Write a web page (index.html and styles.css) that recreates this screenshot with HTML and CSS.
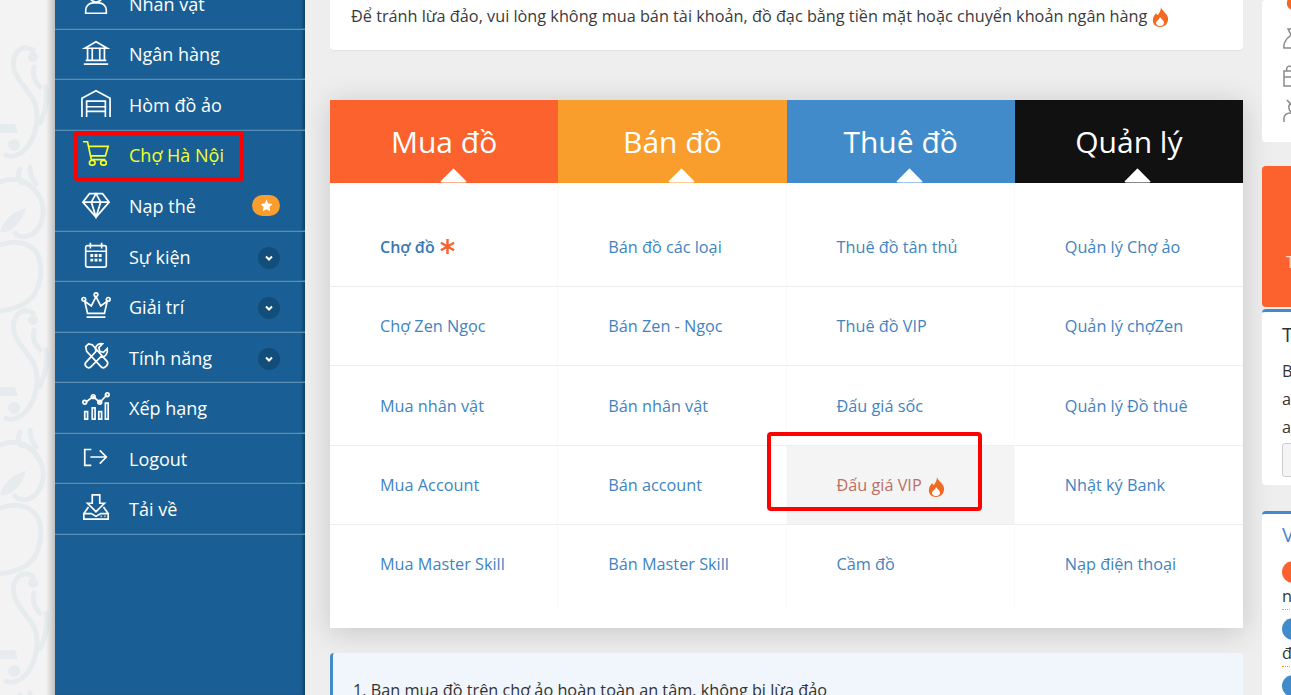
FILE: index.html
```html
<!DOCTYPE html>
<html lang="en">
<head>
  <meta charset="UTF-8"/>
  <meta name="viewport" content="width=device-width, initial-scale=1.0"/>
  <title>Chợ Hà Nội</title>
  <link rel="stylesheet" href="styles.css">
</head>
<body>

  <!-- Patterned page edge -->
  <div class="gutter">
    <svg class="damask" width="55" height="695" viewBox="0 0 55 695">
      <defs>
        <g id="scroll">
          <circle cx="33" cy="20" r="5" class="blot"/>
          <path d="M33 13C20 6 11 18 14 32c3 12 14 20 20 32 5 12 4 28-4 42-5 9-16 16-24 12"/>
          <circle cx="14" cy="108" r="6" class="blot"/>
          <path d="M34 30c-2 8 0 14 6 20M46 50c2 12 0 24-6 36M20 132c-3 6-2 10 2 14M30 130c0 6 2 12 6 17"/>
          <path d="M0 145c14-6 30-2 39 14 7 12 5 27-4 36-7 6-16 6-20 1"/>
          <path d="M0 96h18l-3-9H0zM0 195c12 2 22-10 26-24-10 2-22 10-26 24z" class="blot"/>
          <path d="M0 208c16-6 32-2 38 10 5 12 3 28-4 40-6 8-18 14-34 16"/>
        </g>
      </defs>
      <use href="#scroll" y="37"/>
      <use href="#scroll" y="300"/>
      <use href="#scroll" y="563"/>
    </svg>
  </div>

  <!-- Sidebar -->
  <div class="sidebar">
    <div class="side-item">
      <svg class="side-icon" viewBox="0 0 32 32"><circle cx="16" cy="9" r="7"/><path d="M5 28v-3c0-5 4-8 8-8h6c4 0 8 3 8 8v3z"/></svg>
      <span>Nhân vật</span>
    </div>
    <div class="side-item">
      <svg class="side-icon" viewBox="0 0 32 32"><path d="M4 12 16 5l12 7zM7 12v13M12 12v13M20 12v13M25 12v13M5 25h22M3 29h26"/></svg>
      <span>Ngân hàng</span>
    </div>
    <div class="side-item">
      <svg class="side-icon" viewBox="0 0 32 32"><path d="M1 31V11L16 3l15 8v20M6 31V14h20v17M6 20h20M6 25h20"/></svg>
      <span>Hòm đồ ảo</span>
    </div>
    <div class="side-item item-current">
      <svg class="side-icon" viewBox="0 0 32 32"><path d="M2 4h5l4 19h15M8 9h21l-3 10H10"/><rect x="9" y="24" width="6" height="5" rx="2.500"/><rect x="21" y="24" width="6" height="5" rx="2.500"/></svg>
      <span>Chợ Hà Nội</span>
    </div>
    <div class="side-item">
      <svg class="side-icon" viewBox="0 0 32 32"><path d="M9 5h14l7 9-14 16L2 14zM2 14h28M11 14l5 16 5-16-5-9z"/></svg>
      <span>Nạp thẻ</span>
      <span class="star-pill"><svg width="13" height="13" viewBox="0 0 24 24"><path d="m12 1 3.400 7.300 7.600 1-5.600 5.400 1.500 8L12 18.800 5.100 22.700l1.500-8L1 9.300l7.600-1z"/></svg></span>
    </div>
    <div class="side-item">
      <svg class="side-icon" viewBox="0 0 32 32"><rect x="5" y="6" width="22" height="23" rx="2"/><path d="M5 12h22M10 3v6M22 3v6"/><path class="cal-dots" d="M10 15h3v3h-3zM14.500 15h3v3h-3zM19 15h3v3h-3zM10 20h3v3h-3zM14.500 20h3v3h-3zM19 20h3v3h-3z"/></svg>
      <span>Sự kiện</span>
      <span class="chevron"><svg width="10" height="10" viewBox="0 0 10 10"><path d="m2 3.500 3 3 3-3"/></svg></span>
    </div>
    <div class="side-item">
      <svg class="side-icon" viewBox="0 0 32 32"><circle cx="16" cy="5" r="2"/><circle cx="3" cy="10" r="2"/><circle cx="29" cy="10" r="2"/><path d="M7 25 4 12l7 5 5-10 5 10 7-5-3 13zM6 29h20"/></svg>
      <span>Giải trí</span>
      <span class="chevron"><svg width="10" height="10" viewBox="0 0 10 10"><path d="m2 3.500 3 3 3-3"/></svg></span>
    </div>
    <div class="side-item">
      <svg class="side-icon" viewBox="0 0 32 32"><path d="m5 6 3-3 4 1 16 18c2 3-3 8-6 6L6 11zM28 8l-4 4-4-1-1-4 4-4c-5-1-9 3-7 8L5 23c-2 3 2 7 5 5l11-11c5 1 8-4 7-9z"/></svg>
      <span>Tính năng</span>
      <span class="chevron"><svg width="10" height="10" viewBox="0 0 10 10"><path d="m2 3.500 3 3 3-3"/></svg></span>
    </div>
    <div class="side-item">
      <svg class="side-icon" viewBox="0 0 32 32"><path d="M4 22h3v8H4zM12 18h3v12h-3zM19 22h3v8h-3zM26 13h3v17h-3zM5 12l8-6 7 6 8-8"/><circle cx="4" cy="12" r="2"/><circle cx="13" cy="6" r="2"/><circle cx="20" cy="12" r="2"/><circle cx="28" cy="4" r="2"/></svg>
      <span>Xếp hạng</span>
    </div>
    <div class="side-item">
      <svg class="side-icon" viewBox="0 0 32 32"><path d="M11 8H4v17h7M10 16h17M20 9l7 7-7 7"/></svg>
      <span>Logout</span>
    </div>
    <div class="side-item">
      <svg class="side-icon" viewBox="0 0 32 32"><path d="M12 3h8v9h5l-9 9-9-9h5zM8 16l-5 7v6h26v-6l-5-7M3 23h8l5 3 5-3h8M21 26h1M25 26h1"/></svg>
      <span>Tải về</span>
    </div>
  </div>

  <!-- Main column -->
  <div class="main">
    <div class="notice">
      Để tránh lừa đảo, vui lòng không mua bán tài khoản, đồ đạc bằng tiền mặt hoặc chuyển khoản ngân hàng
      <svg class="flame" width="17" height="20" viewBox="0 0 17 20"><path fill="#f4691f" d="M9 0c1 4 6 6 7 11 .6 5-3 9-8 9-4 0-8-3-7-8 .4-3 2-4 3-6 .6 1 1 2 2 2 1-2 3-4 3-8z"/><path fill="#fff" d="M8 10c1 2 4 3 4 6 0 2-2 3-4 3s-4-1-4-3c0-2 3-3 4-6z"/></svg>
    </div>

    <div class="market">
      <div class="market-head">
        <div class="head-cell head-buy">Mua đồ</div>
        <div class="head-cell head-sell">Bán đồ</div>
        <div class="head-cell head-rent">Thuê đồ</div>
        <div class="head-cell head-manage">Quản lý</div>
      </div>
      <div class="market-body">
        <a class="link link-strong">Chợ đồ <svg class="star-mark" width="17" height="17" viewBox="0 0 18 18"><path stroke="#fb6230" stroke-width="2.600" d="M9 1v16M2 5l14 8M16 5 2 13"/></svg></a>
        <a class="link">Bán đồ các loại</a>
        <a class="link">Thuê đồ tân thủ</a>
        <a class="link">Quản lý Chợ ảo</a>

        <a class="link">Chợ Zen Ngọc</a>
        <a class="link">Bán Zen - Ngọc</a>
        <a class="link">Thuê đồ VIP</a>
        <a class="link">Quản lý chợZen</a>

        <a class="link">Mua nhân vật</a>
        <a class="link">Bán nhân vật</a>
        <a class="link">Đấu giá sốc</a>
        <a class="link">Quản lý Đồ thuê</a>

        <a class="link">Mua Account</a>
        <a class="link">Bán account</a>
        <a class="link link-hot">Đấu giá VIP <svg class="flame" width="17" height="20" viewBox="0 0 17 20"><path fill="#f4691f" d="M9 0c1 4 6 6 7 11 .6 5-3 9-8 9-4 0-8-3-7-8 .4-3 2-4 3-6 .6 1 1 2 2 2 1-2 3-4 3-8z"/><path fill="#fff" d="M8 10c1 2 4 3 4 6 0 2-2 3-4 3s-4-1-4-3c0-2 3-3 4-6z"/></svg></a>
        <a class="link">Nhật ký Bank</a>

        <a class="link">Mua Master Skill</a>
        <a class="link">Bán Master Skill</a>
        <a class="link">Cầm đồ</a>
        <a class="link">Nạp điện thoại</a>
      </div>
    </div>

    <div class="alert">1. Bạn mua đồ trên chợ ảo hoàn toàn an tâm, không bị lừa đảo</div>
  </div>

  <!-- Right column, runs off the window -->
  <div class="aside">
    <div class="aside-card card-icons">
      <svg class="flame-top" width="17" height="20" viewBox="0 0 17 20"><path fill="#f4691f" d="M9 0c1 4 6 6 7 11 .6 5-3 9-8 9-4 0-8-3-7-8 .4-3 2-4 3-6 .6 1 1 2 2 2 1-2 3-4 3-8z"/></svg>
      <svg class="aside-icon" width="24" height="24" viewBox="0 0 24 24"><path d="M6 2h9l-3 6c6 3 10 8 9 13H2C1 15 5 11 9 8z"/></svg>
      <svg class="aside-icon" width="24" height="24" viewBox="0 0 24 24"><path d="M2 8h20v15H2zM2 14h20M10 8v15M5 8c-2-5 5-8 6 0"/></svg>
      <svg class="aside-icon" width="24" height="24" viewBox="0 0 24 24"><path d="M5 1l8 9M2 23v-4c0-3 3-5 6-5h6M9 4c-3 2-3 8 1 9"/></svg>
    </div>
    <div class="aside-card card-orange"><span>T</span></div>
    <div class="aside-card card-text card-first">
      <div class="card-title">T</div>
      <p>B</p>
      <p>a</p>
      <p>a</p>
      <div class="card-input"></div>
    </div>
    <div class="aside-card card-text card-list">
      <div class="card-title card-title-blue">V</div>
      <div class="dot dot-orange"></div>
      <p class="dotted">n</p>
      <div class="dot"></div>
      <p class="dotted">đ</p>
      <div class="dot"></div>
    </div>
  </div>

</body>
</html>
```

FILE: styles.css
```css
html, body {
  height: 100%;
}
body {
  margin: 0;
  display: flex;
  overflow: hidden;
  height: 695px;
  background: #eee;
  color: #333;
  font-family: "Open Sans", sans-serif;
  font-size: 16.25px;
}
.gutter {
  position: relative;
  flex: 0 0 55px;
  background: #f3f3f4;
}
/* Sidebar's shadow on the patterned edge */
.gutter::after {
  content: "";
  position: absolute;
  top: 0;
  right: 0;
  bottom: 0;
  width: 9px;
  background: linear-gradient(to right, rgba(150, 150, 150, 0), rgba(150, 150, 150, .55));
}
.damask {
  display: block;
  fill: none;
  stroke: #e6ebee;
  stroke-width: 5;
  stroke-linecap: round;
}
.damask .blot {
  fill: #e6ebee;
  stroke: none;
}
/* Sidebar */
.sidebar {
  flex: 0 0 250px;
  margin-top: -21px;
  height: 716px;
  background: #195f95;
  box-shadow: inset -3px 0 3px -1px #0f3f66;
  box-sizing: border-box;
}
.side-item {
  display: flex;
  align-items: center;
  height: 50.55px;
  box-sizing: border-box;
  padding: 0 25px 0 26px;
  border-bottom: 1px solid #5a8db3;
  box-shadow: inset 0 -1px #2a6b9b;
  color: #fff;
  font-size: 18px;
  white-space: nowrap;
}
.side-icon {
  flex: 0 0 30px;
  width: 30px;
  height: 30px;
  margin: -4px 18px 0 0;
  fill: none;
  stroke: #fff;
  stroke-width: 1.8;
}
.cal-dots {
  fill: #fff;
  stroke: none;
}
.item-current {
  color: #f5ff2a;
  outline: 4px solid #f00;
  outline-offset: -4px;
  border-bottom-color: transparent;
  box-shadow: none;
  width: 170px;
  margin: 0 0 0 19px;
  padding: 0 0 0 7px;
  border-radius: 3px;
}
.item-current .side-icon {
  stroke: #f5ff2a;
}
.star-pill {
  display: flex;
  align-items: center;
  justify-content: center;
  width: 28px;
  height: 21px;
  margin-left: auto;
  border-radius: 11px;
  background: #fa9d2f;
}
.star-pill svg {
  fill: #fff;
}
.chevron {
  display: flex;
  align-items: center;
  justify-content: center;
  width: 22px;
  height: 22px;
  margin: 2px 0 0 auto;
  border-radius: 50%;
  background: #134d7a;
}
.chevron svg {
  fill: none;
  stroke: #fff;
  stroke-width: 2;
}
/* Main column */
.main {
  flex: 0 0 913px;
  margin: 0 19px 0 25px;
}
.notice {
  height: 50px;
  box-sizing: border-box;
  padding-left: 21px;
  line-height: 33px;
  background: #fff;
  border-radius: 0 0 4px 4px;
  box-shadow: 0 1px 1px #e2e2e2;
  color: #3a3a3a;
}
.flame {
  vertical-align: -5px;
}
/* Market table */
.market {
  margin-top: 50px;
  background: #fff;
  box-shadow: 0 4px 28px rgba(0, 0, 0, .17);
  padding-bottom: 20px;
}
.market-head {
  display: grid;
  grid-template-columns: repeat(4, 1fr);
}
.head-cell {
  position: relative;
  height: 83px;
  line-height: 84px;
  text-align: center;
  color: #fff;
  font-size: 30px;
}
.head-cell::after {
  content: "";
  position: absolute;
  left: calc(50% + 9px);
  bottom: -8px;
  width: 19px;
  height: 19px;
  margin-left: -9.5px;
  background: #fff;
  transform: rotate(45deg);
  clip-path: polygon(0 0, 100% 0, 100% 8%, 8% 100%, 0 100%);
}
.head-buy {
  background: #fb622d;
}
.head-sell {
  background: #f99d2d;
}
.head-rent {
  background: #428bca;
}
.head-manage {
  background: #111;
}
.market-body {
  display: grid;
  grid-template-columns: repeat(4, 1fr);
  grid-template-rows: 103.6px 79.3px 79.7px 79.2px 83.4px;
}
.link {
  display: flex;
  align-items: flex-end;
  gap: 4px;
  box-sizing: border-box;
  padding: 0 0 27px 50px;
  border-bottom: 1px solid #eee;
  border-right: 1px solid #fafafa;
  color: #3f84c0;
  line-height: 24px;
}
.link:nth-child(n+17) {
  border-bottom: 0;
  padding-bottom: 32px;
}
.link:nth-child(4n) {
  border-right: 0;
}
.link-strong {
  font-size: 16px;
  font-weight: 600;
  color: #3a78b0;
}
.star-mark {
  margin-bottom: 4px;
}
.link-hot {
  position: relative;
  background: #f4f4f4;
  color: #bd6f64;
}
.link-hot .flame {
  margin-left: 2px;
}
/* Red marker drawn over the cell */
.link-hot::before {
  content: "";
  position: absolute;
  left: -20px;
  top: -14px;
  width: 207px;
  height: 71px;
  border: 4px solid #f00;
  border-radius: 4px;
}
.alert {
  margin-top: 25px;
  height: 60px;
  box-sizing: border-box;
  padding: 26px 0 0 20px;
  border-left: 3px solid #428bca;
  border-radius: 4px 0 0 0;
  background: #f0f6fb;
  color: #333;
}
/* Right column */
.aside {
  flex: 0 0 29px;
  overflow: hidden;
}
.aside-card {
  width: 60px;
  background: #fff;
  border-radius: 4px;
}
.card-icons {
  display: flex;
  flex-direction: column;
  gap: 12px;
  height: 142px;
  box-sizing: border-box;
  padding: 0 0 0 20px;
  overflow: hidden;
}
.flame-top {
  flex: none;
  margin: -10px 0 5px 4px;
}
.aside-icon {
  flex: none;
  fill: none;
  stroke: #8a8a8a;
  stroke-width: 1.5;
}
.card-orange {
  height: 141px;
  margin-top: 24px;
  background: #fb622d;
  color: #ffd9c9;
  font-size: 16px;
}
.card-orange span {
  display: block;
  padding: 85px 0 0 24px;
}
.card-text {
  box-sizing: border-box;
  border-top: 3px solid #428bca;
  padding-left: 20px;
}
.card-first {
  height: 176px;
  margin-top: 2px;
}
.card-title {
  margin-top: 7px;
  font-size: 20px;
  line-height: 32px;
}
.card-title-blue {
  color: #428bca;
  margin-top: 5px;
}
.card-text p {
  margin: 0;
  line-height: 28px;
}
.card-first p:first-of-type {
  margin-top: 6px;
}
.card-input {
  height: 32px;
  margin-top: 2px;
  border: 1px solid #ccc;
  border-radius: 3px;
  background: #f4f4f4;
}
.card-list {
  height: 200px;
  margin-top: 26px;
}
.dot {
  width: 22px;
  height: 22px;
  margin-top: 8px;
  border-radius: 50%;
  background: #428bca;
}
.dot-orange {
  margin-top: 10px;
  background: #fb622d;
}
.card-text p.dotted {
  border-bottom: 1px dotted #f99d2d;
  line-height: 26px;
}
```
